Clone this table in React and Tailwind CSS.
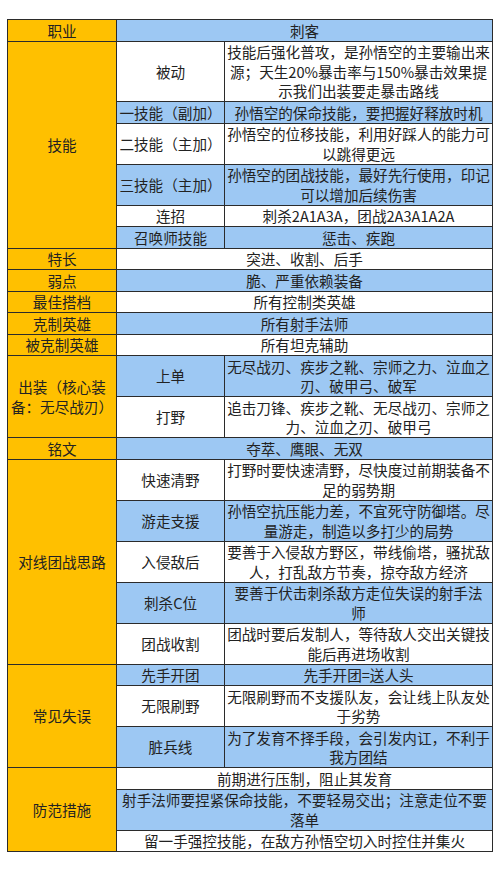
import React from "react";

const BLUE = "bg-[#9dc8f3]";

// each group: label in the orange column, then its rows
// a row is either { sub, lines } or { lines } (spans the 2nd and 3rd column)
const groups = [
  { label: ["职业"], rows: [{ lines: ["刺客"] }] },
  {
    label: ["技能"],
    rows: [
      {
        sub: "被动",
        lines: [
          "技能后强化普攻，是孙悟空的主要输出来",
          "源；天生20%暴击率与150%暴击效果提",
          "示我们出装要走暴击路线",
        ],
      },
      { sub: "一技能（副加）", lines: ["孙悟空的保命技能，要把握好释放时机"] },
      { sub: "二技能（主加）", lines: ["孙悟空的位移技能，利用好踩人的能力可", "以跳得更远"] },
      { sub: "三技能（主加）", lines: ["孙悟空的团战技能，最好先行使用，印记", "可以增加后续伤害"] },
      { sub: "连招", lines: ["刺杀2A1A3A，团战2A3A1A2A"] },
      { sub: "召唤师技能", lines: ["惩击、疾跑"] },
    ],
  },
  { label: ["特长"], rows: [{ lines: ["突进、收割、后手"] }] },
  { label: ["弱点"], rows: [{ lines: ["脆、严重依赖装备"] }] },
  { label: ["最佳搭档"], rows: [{ lines: ["所有控制类英雄"] }] },
  { label: ["克制英雄"], rows: [{ lines: ["所有射手法师"] }] },
  { label: ["被克制英雄"], rows: [{ lines: ["所有坦克辅助"] }] },
  {
    label: ["出装（核心装", "备：无尽战刃）"],
    rows: [
      { sub: "上单", lines: ["无尽战刃、疾步之靴、宗师之力、泣血之", "刃、破甲弓、破军"] },
      { sub: "打野", lines: ["追击刀锋、疾步之靴、无尽战刃、宗师之", "力、泣血之刃、破甲弓"] },
    ],
  },
  { label: ["铭文"], rows: [{ lines: ["夺萃、鹰眼、无双"] }] },
  {
    label: ["对线团战思路"],
    rows: [
      { sub: "快速清野", lines: ["打野时要快速清野，尽快度过前期装备不", "足的弱势期"] },
      { sub: "游走支援", lines: ["孙悟空抗压能力差，不宜死守防御塔。尽", "量游走，制造以多打少的局势"] },
      { sub: "入侵敌后", lines: ["要善于入侵敌方野区，带线偷塔，骚扰敌", "人，打乱敌方节奏，掠夺敌方经济"] },
      { sub: "刺杀C位", lines: ["要善于伏击刺杀敌方走位失误的射手法", "师"] },
      { sub: "团战收割", lines: ["团战时要后发制人，等待敌人交出关键技", "能后再进场收割"] },
    ],
  },
  {
    label: ["常见失误"],
    rows: [
      { sub: "先手开团", lines: ["先手开团=送人头"] },
      { sub: "无限刷野", lines: ["无限刷野而不支援队友，会让线上队友处", "于劣势"] },
      { sub: "脏兵线", lines: ["为了发育不择手段，会引发内讧，不利于", "我方团结"] },
    ],
  },
  {
    label: ["防范措施"],
    rows: [
      { lines: ["前期进行压制，阻止其发育"] },
      { lines: ["射手法师要捏紧保命技能，不要轻易交出；注意走位不要", "落单"] },
      { lines: ["留一手强控技能，在敌方孙悟空切入时控住并集火"] },
    ],
  },
];

const Lines = ({ lines }) =>
  lines.map((l, i) => (
    <React.Fragment key={i}>
      {i > 0 && <br />}
      {l}
    </React.Fragment>
  ));

const cell = "border border-[#2b2b2b] px-0 py-[0.5px] text-center align-middle whitespace-nowrap";

export default function App() {
  let n = 0;
  const trs = [];
  groups.forEach((g, gi) => {
    g.rows.forEach((r, ri) => {
      const bg = n % 2 === 0 ? BLUE : "bg-white";
      n++;
      trs.push(
        <tr key={gi + "-" + ri}>
          {ri === 0 && (
            <td rowSpan={g.rows.length} className={cell + " bg-[#ffc000]"}>
              <Lines lines={g.label} />
            </td>
          )}
          {r.sub ? (
            <>
              <td className={cell + " " + bg}>{r.sub}</td>
              <td className={cell + " " + bg}>
                <Lines lines={r.lines} />
              </td>
            </>
          ) : (
            <td colSpan={2} className={cell + " " + bg}>
              <Lines lines={r.lines} />
            </td>
          )}
        </tr>
      );
    });
  });

  return (
    <div className="w-[500px] h-[889px] bg-white pt-[19px] pl-[7px]">
      <table
        className="table-fixed w-[485px] text-[14.6px] leading-[19.5px] text-[#222]"
        style={{ fontFamily: '"Noto Sans CJK SC", "Noto Sans", sans-serif' }}
      >
        <colgroup>
          <col className="w-[109px]" />
          <col className="w-[108px]" />
          <col className="w-[268px]" />
        </colgroup>
        <tbody>{trs}</tbody>
      </table>
    </div>
  );
}
